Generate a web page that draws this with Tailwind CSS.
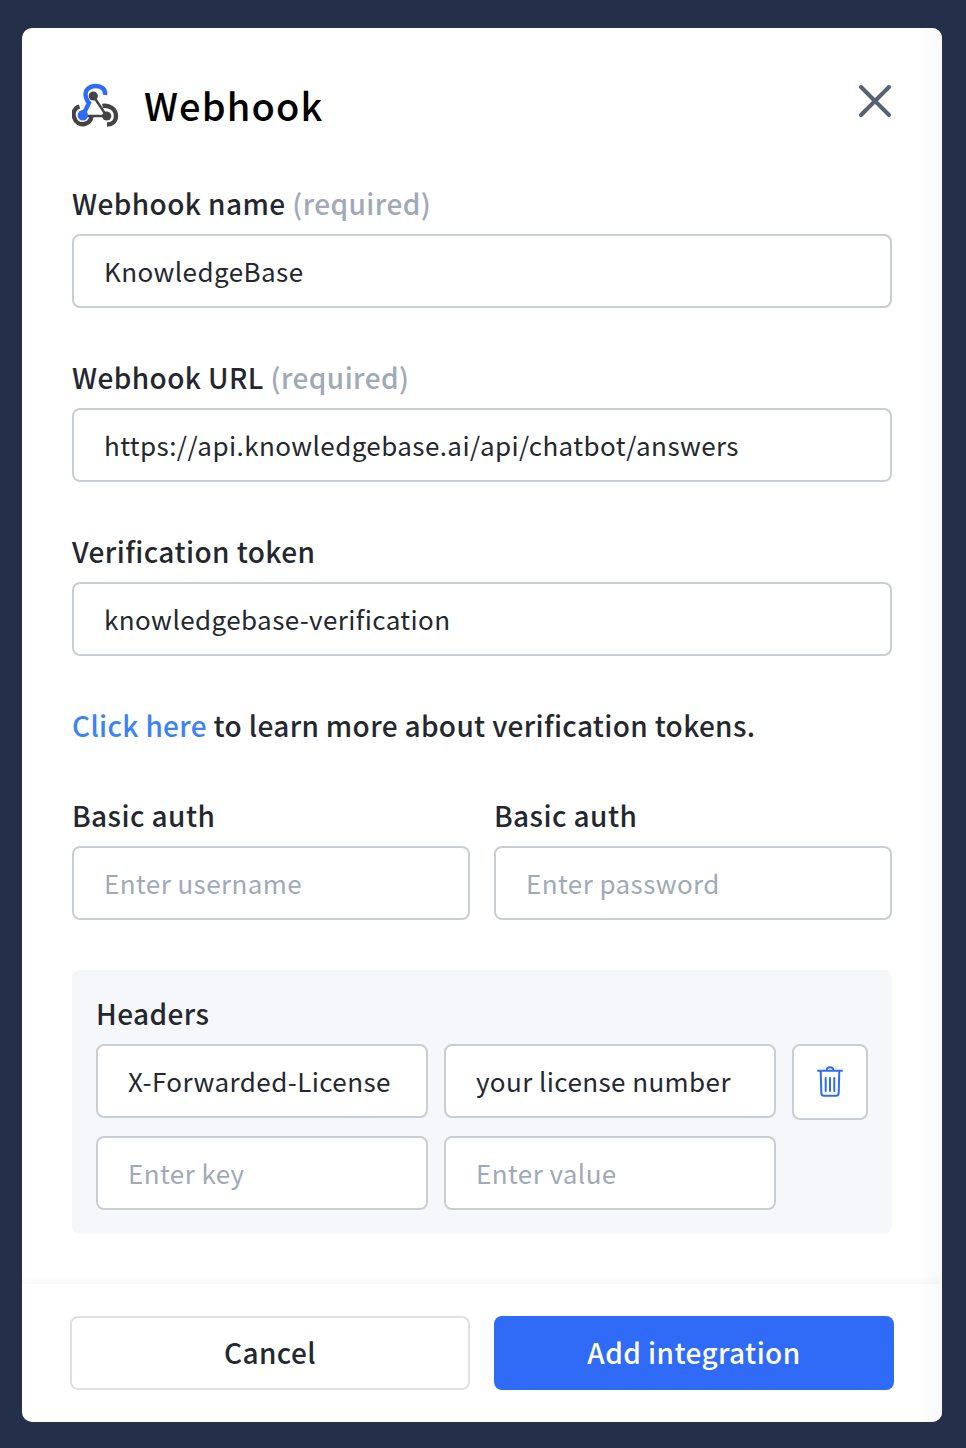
<!DOCTYPE html>
<html lang="en">
<head>
<meta charset="UTF-8">
<title>Webhook</title>
<script src="https://cdn.jsdelivr.net/npm/@tailwindcss/browser@4"></script>
</head>
<body class="bg-[#242f49] h-[1448px] w-[966px] overflow-hidden font-['Noto_Sans_CJK_JP','Noto_Sans',sans-serif]">
<div class="pt-[28px] pl-[22px]">
  <div class="relative w-[920px] h-[1394px] bg-white rounded-[10px] overflow-hidden flex flex-col">
    <div class="absolute top-0 right-0 w-[24px] h-full bg-gradient-to-r from-transparent to-[#f8f8f9] pointer-events-none"></div>
    <div class="flex-1 px-[50px] pt-[50px]">
      <!-- Header -->
      <div class="flex items-start justify-between h-[60px]">
        <div class="flex items-center h-[54px]">
          <svg class="w-[48px] h-[48px] mr-[24px]" viewBox="72 81 48 48" fill="none">
            <path d="M93.3 96 L106.7 116 H83" stroke="#444" stroke-width="2.4"/>
            <path d="M79.5 106.5 C74 108 72.8 113 74 117 C75.5 122.5 80 125 84.5 124 C88.5 123 91 120.5 91.5 116.5" stroke="#444" stroke-width="4.4"/>
            <path d="M102.5 106 C109 104.5 116 109 116 116 C116 121.5 112 124.5 107 124.5" stroke="#444" stroke-width="4.4"/>
            <path d="M105 95 C106 89 101 86 96 86 C88.5 86 84 91 86 97.5 C86.8 100 87.5 101.5 89 103 L83 115" stroke="#2f6bf6" stroke-width="4.4"/>
            <circle cx="93.3" cy="96" r="4.6" fill="#444"/>
            <circle cx="82.8" cy="115.3" r="5.2" fill="#2f6bf6"/>
            <circle cx="106.7" cy="116" r="4.6" fill="#444"/>
          </svg>
          <h1 class="text-[38px] tracking-[0.03em] font-medium leading-none text-black">Webhook</h1>
        </div>
        <button class="text-[#556274] mt-[6px]" aria-label="Close">
          <svg class="w-[34px] h-[34px]" viewBox="0 0 34 34" fill="none" stroke="currentColor" stroke-width="4" stroke-linecap="round"><path d="M3 3 L31 31 M31 3 L3 31"/></svg>
        </button>
      </div>

      <div class="mt-[43px]">
        <label class="block text-[28px] tracking-[0.015em] leading-[44px] mb-[9px] font-medium text-[#24282e]">Webhook name <span class="text-[#a0a9b8]">(required)</span></label>
        <input value="KnowledgeBase" class="block w-full h-[74px] px-[30px] pb-[1px] border-2 border-[#c9ced6] rounded-[8px] text-[26px] tracking-[0.016em] text-[#24282e] outline-none">
      </div>
      <div class="mt-[47px]">
        <label class="block text-[28px] tracking-[0.015em] leading-[44px] mb-[9px] font-medium text-[#24282e]">Webhook URL <span class="text-[#a0a9b8]">(required)</span></label>
        <input value="https://api.knowledgebase.ai/api/chatbot/answers" class="block w-full h-[74px] px-[30px] pb-[1px] border-2 border-[#c9ced6] rounded-[8px] text-[26px] tracking-[0.016em] text-[#24282e] outline-none">
      </div>
      <div class="mt-[47px]">
        <label class="block text-[28px] tracking-[0.015em] leading-[44px] mb-[9px] font-medium text-[#24282e]">Verification token</label>
        <input value="knowledgebase-verification" class="block w-full h-[74px] px-[30px] pb-[1px] border-2 border-[#c9ced6] rounded-[8px] text-[26px] tracking-[0.016em] text-[#24282e] outline-none">
      </div>

      <p class="mt-[47px] text-[28px] tracking-[0.012em] leading-[44px] font-medium text-[#24282e]"><a href="#" class="text-[#3b82f6]">Click here</a> to learn more about verification tokens.</p>

      <div class="mt-[46px] grid grid-cols-2 gap-[24px]">
        <div>
          <label class="block text-[28px] tracking-[0.015em] leading-[44px] mb-[9px] font-medium text-[#24282e]">Basic auth</label>
          <input placeholder="Enter username" class="block w-full h-[74px] px-[30px] pb-[1px] border-2 border-[#c9ced6] rounded-[8px] text-[26px] tracking-[0.016em] placeholder:text-[#a0a9b8] outline-none">
        </div>
        <div>
          <label class="block text-[28px] tracking-[0.015em] leading-[44px] mb-[9px] font-medium text-[#24282e]">Basic auth</label>
          <input placeholder="Enter password" class="block w-full h-[74px] px-[30px] pb-[1px] border-2 border-[#c9ced6] rounded-[8px] text-[26px] tracking-[0.016em] placeholder:text-[#a0a9b8] outline-none">
        </div>
      </div>

      <!-- Headers -->
      <div class="mt-[50px] bg-[#f6f7fb] rounded-[8px] h-[264px] px-[24px] pt-[21px]">
        <div class="text-[28px] tracking-[0.015em] leading-[44px] h-[53px] font-medium text-[#24282e]">Headers</div>
        <div class="flex gap-[16px] items-start">
          <input value="X-Forwarded-License" class="block w-[332px] h-[74px] px-[30px] pb-[1px] bg-white border-2 border-[#c9ced6] rounded-[8px] text-[26px] tracking-[0.016em] text-[#24282e] outline-none">
          <input value="your license number" class="block w-[332px] h-[74px] px-[30px] pb-[1px] bg-white border-2 border-[#c9ced6] rounded-[8px] text-[26px] tracking-[0.016em] text-[#24282e] outline-none">
          <button class="w-[76px] h-[76px] flex items-center justify-center bg-white border-2 border-[#c9ced6] rounded-[8px]" aria-label="Delete">
            <svg class="w-[26px] h-[32px]" viewBox="0 0 26 32" fill="none" stroke="#2f6bf6" stroke-width="2" stroke-linecap="round" stroke-linejoin="round">
              <path d="M1 4.7 H25 M9.7 4.7 C9.7 2 10.5 1.3 13 1.3 C15.5 1.3 16.3 2 16.3 4.7 M3.7 4.7 L4.3 27 C4.3 29 5.3 29.7 7 29.7 H19 C20.7 29.7 21.7 29 21.7 27 L22.3 4.7"/>
              <path d="M8.7 12 V25 M13 12 V25 M17.3 12 V25"/>
            </svg>
          </button>
        </div>
        <div class="flex gap-[16px] mt-[16px]">
          <input placeholder="Enter key" class="block w-[332px] h-[74px] px-[30px] pb-[1px] bg-white border-2 border-[#c9ced6] rounded-[8px] text-[26px] tracking-[0.016em] placeholder:text-[#a0a9b8] outline-none">
          <input placeholder="Enter value" class="block w-[332px] h-[74px] px-[30px] pb-[1px] bg-white border-2 border-[#c9ced6] rounded-[8px] text-[26px] tracking-[0.016em] placeholder:text-[#a0a9b8] outline-none">
        </div>
      </div>
    </div>

    <!-- Footer -->
    <div class="h-[138px] pt-[32px] pl-[48px] flex gap-[24px] shadow-[0_-3px_8px_rgba(0,0,0,0.035)] relative">
      <button class="w-[400px] h-[74px] pb-[2px] bg-white border-2 border-[#dde1e7] rounded-[8px] text-[28px] tracking-[0.015em] font-medium text-[#24282e]">Cancel</button>
      <button class="w-[400px] h-[74px] pb-[2px] bg-[#2f6bf6] rounded-[8px] text-[28px] tracking-[0.015em] font-medium text-white">Add integration</button>
    </div>
  </div>
</div>
</body>
</html>
